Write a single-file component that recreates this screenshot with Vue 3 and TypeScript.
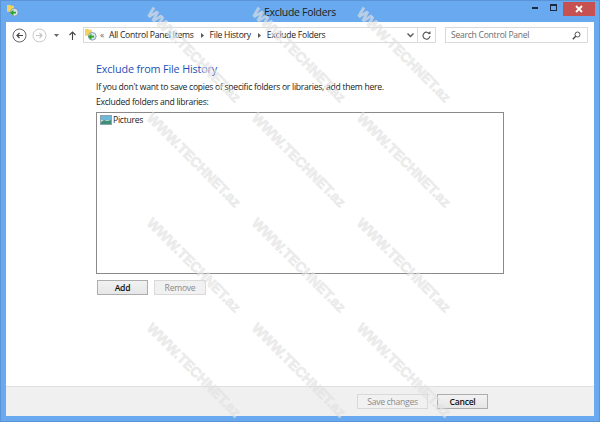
<script setup lang="ts">
const cols = [193, 298, 403]
const rows = [54, 159, 264, 369]
const marks = rows.flatMap((y) => cols.map((x) => ({ left: `${x - 65}px`, top: `${y - 9}px` })))
</script>

<template>
  <div class="win">
    <header class="title">
      <svg class="app-ico" width="12" height="12" viewBox="0 0 14 14">
        <path d="M0 0h4l1 1h3v7H0z" fill="#f3d35f" />
        <circle cx="8.500" cy="8.500" r="4.500" fill="#d6e4ea" stroke="#7d99a8" />
        <path d="M3.500 9l4 3.500V10h3V8h-3V5.500z" fill="#2aa52a" />
      </svg>
      <span class="title-text">Exclude Folders</span>
      <div class="controls">
        <span class="ctl"><svg width="9" height="3"><rect y="0" width="6" height="2" x="2" fill="#1c2c40" /></svg></span>
        <span class="ctl"><svg width="10" height="9"><rect x="1.500" y="1.500" width="6" height="5" fill="none" stroke="#1c2c40" /><rect x="1" y="0" width="7" height="2" fill="#1c2c40" /></svg></span>
        <span class="close"><svg width="8" height="8" viewBox="0 0 8 8"><path d="M1 1l6 6M7 1L1 7" stroke="#fff" stroke-width="1.800" /></svg></span>
      </div>
    </header>
    <div class="inner">
      <nav class="nav">
        <svg class="back" width="15" height="15" viewBox="0 0 15 15"><circle cx="7.500" cy="7.500" r="6.500" fill="#fff" stroke="#666" /><path d="M11 7.500H5M7.500 5L5 7.500 7.500 10" fill="none" stroke="#444" stroke-width="1.200" /></svg>
        <svg class="fwd" width="15" height="15" viewBox="0 0 15 15"><circle cx="7.500" cy="7.500" r="6.500" fill="#fff" stroke="#c9c9c9" /><path d="M4 7.500h6M7.500 5L10 7.500 7.500 10" fill="none" stroke="#c4c4c4" stroke-width="1.200" /></svg>
        <svg class="drop" width="5" height="3"><path d="M0 0h5L2.500 3z" fill="#666" /></svg>
        <svg class="up" width="7" height="9" viewBox="0 0 7 9"><path d="M3.500 9V1M.5 4l3-3 3 3" fill="none" stroke="#444" stroke-width="1.100" /></svg>
        <div class="address">
          <svg class="addr-ico" width="12" height="12" viewBox="0 0 14 14">
            <path d="M0 0h4l1 1h3v7H0z" fill="#f3d35f" />
            <circle cx="8.500" cy="8.500" r="4.500" fill="#d6e4ea" stroke="#7d99a8" />
            <path d="M3.500 9l4 3.500V10h3V8h-3V5.500z" fill="#2aa52a" />
          </svg>
          <span class="chev">«</span>
          <span>All Control Panel Items</span>
          <svg class="sep" width="3" height="5"><path d="M0 0l3 2.500L0 5z" fill="#555" /></svg>
          <span>File History</span>
          <svg class="sep" width="3" height="5"><path d="M0 0l3 2.500L0 5z" fill="#555" /></svg>
          <span class="crumb-last">Exclude Folders</span>
          <svg class="addr-drop" width="7" height="5" viewBox="0 0 7 5"><path d="M.5.500l3 3 3-3" fill="none" stroke="#555" stroke-width="1.300" /></svg>
          <span class="refresh"><svg width="9" height="9" viewBox="0 0 9 9"><path d="M7.600 3A3.500 3.500 0 1 0 8 5" fill="none" stroke="#555" stroke-width="1.100" /><path d="M5.500 3H8.500V0z" fill="#555" /></svg></span>
        </div>
        <div class="search">
          <span>Search Control Panel</span>
          <svg width="9" height="9" viewBox="0 0 9 9"><circle cx="5.500" cy="3.500" r="2.500" fill="none" stroke="#555" /><path d="M3.700 5.300L.8 8.200" stroke="#444" stroke-width="1.400" /></svg>
        </div>
      </nav>
      <main class="main">
        <h1>Exclude from File History</h1>
        <p class="intro">If you don't want to save copies of specific folders or libraries, add them here.</p>
        <p class="lab">Excluded folders and libraries:</p>
        <div class="list">
          <div class="item">
            <svg width="12" height="10" viewBox="0 0 12 10">
              <rect x=".5" y=".5" width="11" height="9" fill="#cfdbe4" stroke="#8ea1b0" />
              <rect x="1" y="1" width="10" height="4" fill="#6fb7d8" />
              <path d="M1 7l3-2 3 1 4-1v4H1z" fill="#3f8f76" />
            </svg>
            <span>Pictures</span>
          </div>
        </div>
        <div class="btns">
          <button class="btn add">Add</button>
          <button class="btn off remove">Remove</button>
        </div>
      </main>
      <footer class="foot">
        <button class="btn off save">Save changes</button>
        <button class="btn cancel">Cancel</button>
      </footer>
    </div>
    <span v-for="(m, i) in marks" :key="i" class="mark" :style="m">WWW.TECHNET.az</span>
  </div>
</template>

<style scoped>
.win {
  position: relative;
  width: 600px;
  height: 422px;
  box-sizing: border-box;
  background: #69a9ef;
  border: 1px solid #5a93d6;
  overflow: hidden;
  display: flex;
  flex-direction: column;
  font-family: "Open Sans", "Noto Sans", sans-serif;
  font-size: 8.600px;
  letter-spacing: -0.27px;
  color: #1a1a1a;
}
.title {
  height: 21px;
  flex: none;
  position: relative;
  display: flex;
  align-items: center;
  justify-content: center;
}
.app-ico { position: absolute; left: 6px; top: 4px; }
.title-text { font-size: 10.500px; letter-spacing: -0.3px; color: #222; margin-top: 1px; }
.controls {
  position: absolute;
  right: 4px;
  top: 0;
  display: flex;
  align-items: center;
}
.ctl { width: 19px; height: 15px; display: flex; align-items: center; justify-content: center; }
.close {
  width: 32px;
  height: 14px;
  background: #c75050;
  display: flex;
  align-items: center;
  justify-content: center;
}
.inner {
  flex: 1;
  margin: 0 5px 5px;
  background: #fff;
  display: flex;
  flex-direction: column;
  min-height: 0;
}
.nav {
  height: 16px;
  flex: none;
  margin-top: 5px;
  display: flex;
  align-items: center;
}
.back { margin-left: 6px; }
.fwd { margin-left: 5px; }
.drop { margin-left: 7px; }
.up { margin-left: 10px; margin-right: 7px; }
.address {
  width: 351px;
  height: 14px;
  border: 1px solid #dadada;
  display: flex;
  align-items: center;
  position: relative;
  box-sizing: content-box;
}
.addr-ico { margin-left: 1px; }
.chev { margin: 0 5px 0 3px; color: #666; }
.sep { margin: 0 6px 0 7px; }
.addr-drop { position: absolute; right: 21px; top: 5px; }
.refresh {
  position: absolute;
  right: 0;
  top: 0;
  bottom: 0;
  width: 17px;
  border-left: 1px solid #dadada;
  display: flex;
  align-items: center;
  justify-content: center;
}
.search {
  margin-left: 9px;
  width: 130px;
  height: 14px;
  border: 1px solid #dadada;
  padding: 0 6px 0 5px;
  box-sizing: content-box;
  display: flex;
  align-items: center;
  justify-content: space-between;
  color: #6d6d6d;
}
.main {
  flex: 1;
  padding: 19px 0 0 90px;
  min-height: 0;
}
h1 {
  margin: 0;
  font-size: 10.800px;
  letter-spacing: -0.15px;
  font-weight: 400;
  color: #2352b5;
  line-height: 14px;
}
.intro { margin: 5px 0 0; line-height: 12px; }
.lab { margin: 3px 0 0; line-height: 12px; }
.list {
  margin-top: 4px;
  width: 408px;
  height: 162px;
  box-sizing: border-box;
  border: 1px solid #8a8a8a;
  padding: 1px 3px;
  background: #fff;
}
.item { display: flex; align-items: center; gap: 1px; line-height: 12px; }
.btns { display: flex; gap: 6px; margin: 6px 0 0 1px; }
.btn {
  height: 15px;
  padding: 0;
  box-sizing: border-box;
  border: 1px solid #adadad;
  background: linear-gradient(#f2f2f2, #e6e6e6);
  font: inherit;
  letter-spacing: inherit;
  font-weight: 600;
  color: #111;
}
.off { background: #f1f1f1; border-color: #d9d9d9; color: #8b8b8b; font-weight: 400; }
.add { width: 51px; }
.remove { width: 52px; }
.foot {
  height: 30px;
  flex: none;
  background: #f0f0f0;
  border-top: 1px solid #dfdfdf;
  box-sizing: border-box;
  display: flex;
  align-items: center;
  justify-content: flex-end;
  gap: 9px;
  padding: 0 106px 0 0;
}
.save { width: 71px; }
.cancel { width: 51px; }
.mark {
  position: absolute;
  width: 130px;
  height: 18px;
  transform: rotate(45deg);
  font-family: "Liberation Sans", Arial, sans-serif;
  font-weight: 700;
  font-size: 14px;
  letter-spacing: 0;
  line-height: 18px;
  text-align: center;
  white-space: nowrap;
  color: rgba(226, 226, 226, 0.55);
  -webkit-text-stroke: 0.9px rgba(226, 226, 226, 0.55);
  pointer-events: none;
}
</style>
